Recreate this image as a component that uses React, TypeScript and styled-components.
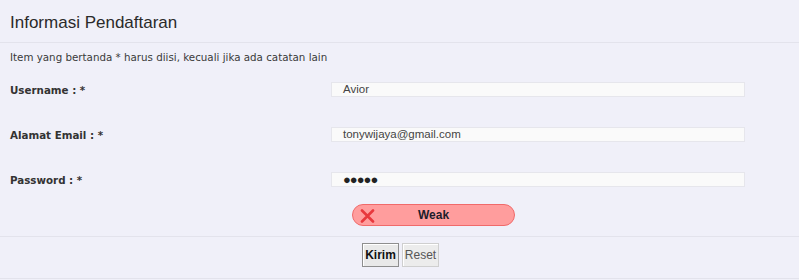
import React from "react";
import styled, { createGlobalStyle } from "styled-components";

const Global = createGlobalStyle`
  html, body { margin: 0; padding: 0; background: #f0f0f9; }
  body { font-family: "Liberation Sans", Arial, sans-serif; color: #333; }
`;

const Panel = styled.div`
  width: 799px;
  background: #f0f0f9;
`;

const Header = styled.div`
  height: 43px;
  box-sizing: border-box;
  padding: 13px 10px 0;
  border-bottom: 1px solid #e3e3ec;
  font-size: 17px;
  line-height: 20px;
  color: #2a2a2a;
`;

const Note = styled.div`
  height: 24px;
  box-sizing: border-box;
  padding: 8px 10px 0;
  font-family: "DejaVu Sans", Verdana, sans-serif;
  font-size: 10.3px;
  line-height: 13px;
  color: #3a3a3a;
`;

const Row = styled.div`
  display: grid;
  grid-template-columns: 331px 414px;
  align-items: center;
  height: 45px;
`;

const Label = styled.div`
  padding-left: 10px;
  font-family: "DejaVu Sans", Verdana, sans-serif;
  font-size: 10.3px;
  font-weight: bold;
  color: #333;
`;

const Field = styled.div<{ $dots?: boolean }>`
  height: 15px;
  box-sizing: border-box;
  background: #fafafa;
  border: 1px solid #e6e6ec;
  padding-left: 11px;
  font-size: ${(p) => (p.$dots ? "13px" : "11.5px")};
  line-height: 13px;
  color: ${(p) => (p.$dots ? "#222" : "#444")};
  letter-spacing: ${(p) => (p.$dots ? "-1px" : "0")};
  display: flex;
  align-items: center;
`;

const StrengthRow = styled.div`
  display: grid;
  grid-template-columns: 352px 163px;
  padding-top: 2px;
  height: 35px;
  box-sizing: border-box;
  border-bottom: 1px solid #e3e3ec;
`;

const Strength = styled.div`
  grid-column: 2;
  position: relative;
  height: 22px;
  box-sizing: border-box;
  border: 1px solid #f06a6a;
  border-radius: 11px;
  background: #ff9d9d;
  display: flex;
  align-items: center;
  justify-content: center;
  font-size: 12px;
  font-weight: bold;
  color: #1d1d2b;
`;

const XIcon = styled.svg`
  position: absolute;
  left: 7px;
  top: 4px;
`;

const Footer = styled.div`
  height: 42px;
  box-sizing: border-box;
  border-bottom: 1px solid #e3e3ec;
  display: flex;
  justify-content: center;
  align-items: flex-start;
  gap: 3px;
  padding: 6px 0 0 2px;
`;

const Button = styled.button<{ $primary?: boolean }>`
  height: 24px;
  width: 37px;
  padding: 0;
  box-sizing: border-box;
  font-family: "Liberation Sans", Arial, sans-serif;
  font-size: 12px;
  font-weight: ${(p) => (p.$primary ? "bold" : "normal")};
  color: ${(p) => (p.$primary ? "#111" : "#555")};
  background: ${(p) => (p.$primary ? "#e9e9e9" : "#ececec")};
  border: 1px solid ${(p) => (p.$primary ? "#8e8e8e" : "#cfcfcf")};
  box-shadow: inset 1px 1px 0 #fff;
`;

const fields = [
  { label: "Username : *", value: "Avior" },
  { label: "Alamat Email : *", value: "tonywijaya@gmail.com" },
  { label: "Password : *", value: "●●●●●", dots: true },
];

export default function App() {
  return (
    <Panel>
      <Global />
      <Header>Informasi Pendaftaran</Header>
      <Note>Item yang bertanda * harus diisi, kecuali jika ada catatan lain</Note>
      {fields.map((f) => (
        <Row key={f.label}>
          <Label>{f.label}</Label>
          <Field $dots={f.dots}>{f.value}</Field>
        </Row>
      ))}
      <StrengthRow>
        <Strength>
          <XIcon width="15" height="14" viewBox="0 0 15 14">
            <path d="M2 1.5 L13 12.5 M13 1.5 L2 12.5" stroke="#e8383d" strokeWidth="2.6" strokeLinecap="round" />
          </XIcon>
          Weak
        </Strength>
      </StrengthRow>
      <Footer>
        <Button $primary>Kirim</Button>
        <Button>Reset</Button>
      </Footer>
    </Panel>
  );
}
